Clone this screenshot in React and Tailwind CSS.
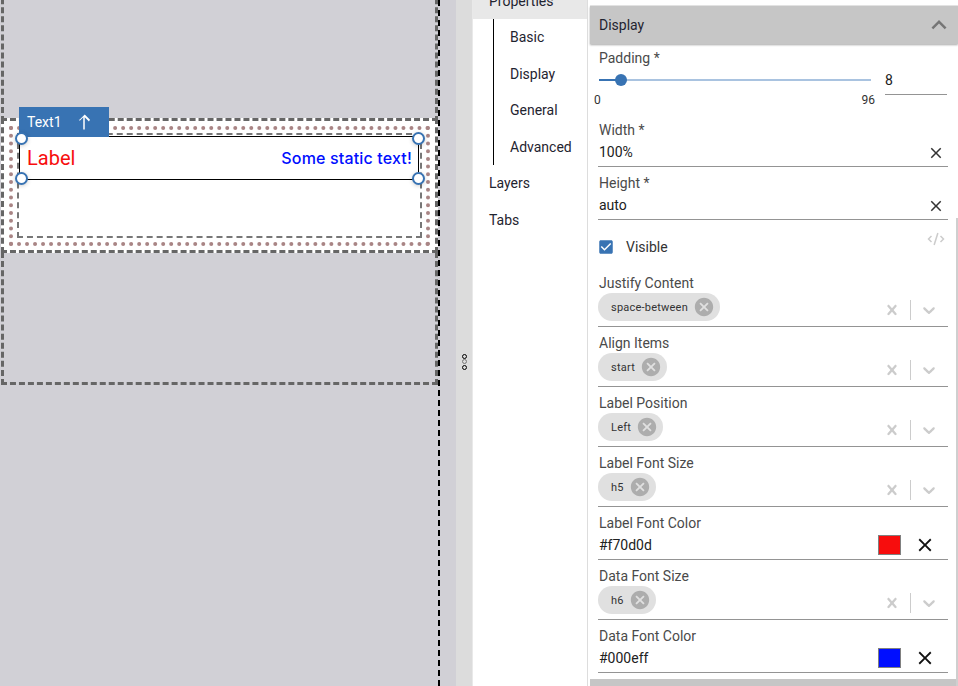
const closePath = 'M19 6.41L17.59 5 12 10.59 6.41 5 5 6.41 10.59 12 5 17.59 6.41 19 12 13.41 17.59 19 19 17.59 13.41 12z';
const crossPath = 'M14.348 14.849c-0.469 0.469-1.229 0.469-1.697 0l-2.651-3.030-2.651 3.029c-0.469 0.469-1.229 0.469-1.697 0-0.469-0.469-0.469-1.229 0-1.697l2.758-3.15-2.759-3.152c-0.469-0.469-0.469-1.228 0-1.697s1.228-0.469 1.697 0l2.652 3.031 2.651-3.031c0.469-0.469 1.228-0.469 1.697 0s0.469 1.229 0 1.697l-2.758 3.152 2.758 3.15c0.469 0.469 0.469 1.229 0 1.698z';
const chevronPath = 'M4.516 7.548c0.436-0.446 1.043-0.481 1.576 0l3.908 3.747 3.908-3.747c0.533-0.481 1.141-0.446 1.576 0 0.436 0.445 0.408 1.197 0 1.615-0.406 0.418-4.695 4.502-4.695 4.502-0.217 0.223-0.502 0.335-0.789 0.335s-0.572-0.112-0.79-0.335c0 0-4.287-4.084-4.695-4.502s-0.436-1.17 0-1.615z';
const cancelPath = 'M12 2C6.47 2 2 6.47 2 12s4.47 10 10 10 10-4.47 10-10S17.53 2 12 2zm5 13.59L15.59 17 12 13.41 8.41 17 7 15.59 10.59 12 7 8.41 8.41 7 12 10.59 15.59 7 17 8.41 13.41 12 17 15.59z';

const CloseIcon = ({ size = 18, className = '' }) => (
  <svg width={size} height={size} viewBox="0 0 24 24" fill="currentColor" className={className}>
    <path d={closePath} />
  </svg>
);

const Handle = ({ className }) => (
  <div className={`absolute w-[13px] h-[13px] rounded-full bg-white border-2 border-[#3873b3] shadow-[0_1px_4px_rgba(0,0,0,0.2)] ${className}`} />
);

const TextField = ({ label, value }) => (
  <div className="h-[47px] mb-[6px] border-b border-[#949494]">
    <div className="h-5 pl-px leading-5 text-[#4a4a4a]">{label}</div>
    <div className="flex items-center justify-between h-[25px] pl-px pr-[3px] text-[#212121]">
      <span className="-mt-px">{value}</span>
      <CloseIcon className="text-[#333]" />
    </div>
  </div>
);

const ColorField = ({ label, value, swatch }) => (
  <div className="h-[47px] mb-[6px] border-b border-[#949494]">
    <div className="h-5 pl-px leading-5 text-[#4a4a4a]">{label}</div>
    <div className="flex items-center h-[24px] pl-px text-[#212121]">
      <span className="flex-1">{value}</span>
      <div className={`w-[23px] h-5 border border-[#808080] ${swatch}`} />
      <CloseIcon size={22} className="ml-[13px] mr-[12px] text-[#111]" />
    </div>
  </div>
);

const SelectField = ({ label, value }) => (
  <div className="h-[54px] mb-[6px] border-b border-[#949494]">
    <div className="h-5 pl-px leading-5 text-[#4a4a4a]">{label}</div>
    <div className="flex items-center h-7">
      <div className="flex items-center h-7 rounded-full bg-[#e0e0e0] pl-[13px] pr-[5px] text-[11px] tracking-[0.02em] text-[#333]">
        <span className="mt-px">{value}</span>
        <svg width="22" height="22" viewBox="0 0 24 24" fill="#adadad" className="ml-[5px]">
          <path d={cancelPath} />
        </svg>
      </div>
      <div className="flex-1" />
      <div className="flex items-center mt-[5px] text-[#cccccc]">
        <svg width="20" height="20" viewBox="0 0 20 20" fill="currentColor"><path d={crossPath} /></svg>
        <div className="w-px h-5 bg-[#cccccc] ml-[8px] mr-[8px]" />
        <svg width="20" height="20" viewBox="0 0 20 20" fill="currentColor" className="mr-[9px]"><path d={chevronPath} /></svg>
      </div>
    </div>
  </div>
);

export default function App() {
  return (
    <div className="flex w-[958px] h-[686px] overflow-hidden bg-white text-sm font-['Roboto',sans-serif]">

      {/* Canvas */}
      <div className="w-[456px] shrink-0 bg-[#d1d0d6]">
        <div className="flex flex-col w-[440px] h-full border-r-2 border-dashed border-black">
          <div className="w-[437px] h-[405px] shrink-0 -mt-[20px] pt-[135px] border-[3px] border-dashed border-[#666666] ml-px">
            <div className="relative -mx-[3px] h-[135px] border-[3px] border-dashed border-[#666666] bg-white p-[5px]">
              <div className="h-[120px] border-4 border-dotted border-[#a98585] px-[4px] pt-[3px]">
                <div className="relative h-[105px] border-2 border-dashed border-[#777777]">
                  <div className="flex items-center justify-between h-11 mt-px mr-px border border-black pl-[7px] pr-[6px]">
                    <span className="text-xl text-[#f70d0d]">Label</span>
                    <span className="font-['Inter',sans-serif] text-base font-medium tracking-[0.01em] text-[#000eff]">Some static text!</span>
                  </div>
                  <div className="absolute left-0 -top-[28px] flex items-center w-[90px] h-[30px] pl-2 bg-[#3873b3] text-white">
                    <span>Text1</span>
                    <svg width="18" height="18" viewBox="0 0 24 24" fill="currentColor" className="ml-[13px]">
                      <path d="M5 9l1.41 1.41L11 5.83V22h2V5.83l5.59 5.59L20 9l-7-7-7 7z" />
                    </svg>
                  </div>
                  <Handle className="-left-[4px] -top-[3px]" />
                  <Handle className="-left-[4px] top-[37px]" />
                  <Handle className="-right-[5px] -top-[3px]" />
                  <Handle className="-right-[5px] top-[37px]" />
                </div>
              </div>
            </div>
          </div>
        </div>
      </div>

      {/* Splitter */}
      <div className="flex flex-col items-center justify-center gap-[0.5px] w-[17px] shrink-0 pt-[37px] bg-[#dcdcdc] border-r border-[#e9e9e9]">
        <div className="w-[5px] h-[5px] rounded-full border border-black" />
        <div className="w-[5px] h-[5px] rounded-full border border-[#777777]" />
        <div className="w-[5px] h-[5px] rounded-full border border-black" />
      </div>

      {/* Nav */}
      <div className="w-[114px] shrink-0 -mt-[17.5px] text-[#1f2430] leading-[36.5px]">
        <div className="h-[36.5px] pl-4 bg-[#e8e8e8]">Properties</div>
        <div className="ml-5 pl-4 border-l border-black">
          <div className="h-[36.5px]">Basic</div>
          <div className="h-[36.5px]">Display</div>
          <div className="h-[36.5px]">General</div>
          <div className="h-[36.5px]">Advanced</div>
        </div>
        <div className="h-[36.5px] pl-4">Layers</div>
        <div className="h-[36.5px] pl-4">Tabs</div>
      </div>

      {/* Properties panel */}
      <div className="relative flex-1 border-l border-[#dddddd] pl-[2px]">
        <div className="h-[6px] border-b border-[#e8e8e8]" />
        <div className="flex items-center justify-between h-[38px] pl-[9px] pr-[4px] bg-[#c6c6c6] text-[#1f2430] shadow-[0_1px_2px_rgba(0,0,0,0.35)]">
          <span>Display</span>
          <svg width="30" height="30" viewBox="0 0 24 24" fill="#757575">
            <path d="M12 8l-6 6 1.41 1.41L12 10.83l4.59 4.58L18 14z" />
          </svg>
        </div>
        <div className="pl-2 pr-[10px] pt-1">
          <div className="h-[52px] mb-[20px]">
            <div className="h-5 pl-px leading-5 text-[#4a4a4a]">Padding *</div>
            <div className="flex">
              <div className="w-[272px] ml-px">
                <div className="relative h-[24px] flex items-center">
                  <div className="w-full h-[2px] bg-[#a9c3e0]" />
                  <div className="absolute left-0 w-[17px] h-[2px] bg-[#3873b3]" />
                  <div className="absolute left-[16px] w-[12px] h-[12px] rounded-full bg-[#3873b3]" />
                </div>
                <div className="flex justify-between -ml-[5px] -mr-[4px] text-xs leading-[14px] text-[#333] mt-[1px]">
                  <span>0</span>
                  <span>96</span>
                </div>
              </div>
              <div className="w-[62px] h-[27px] ml-[14px] border-b border-[#949494] leading-6 text-[#212121]">8</div>
            </div>
          </div>
          <TextField label="Width *" value="100%" />
          <TextField label="Height *" value="auto" />
          <div className="relative flex items-center h-[47px] pb-[5px]">
            <svg width="18" height="18" viewBox="0 0 24 24" fill="#3873b3" className="-ml-px">
              <path d="M19 3H5c-1.11 0-2 .9-2 2v14c0 1.1.89 2 2 2h14c1.1 0 2-.9 2-2V5c0-1.11-.9-2-2-2zm-9 14l-5-5 1.41-1.41L10 14.17l7.59-7.59L19 8l-9 9z" />
            </svg>
            <span className="ml-[11px] text-[#333]">Visible</span>
            <svg width="18" height="18" viewBox="0 0 24 24" fill="none" stroke="#cccccc" strokeWidth="2" className="absolute right-[3px] top-[4px]">
              <path d="m18 16 4-4-4-4" />
              <path d="m6 8-4 4 4 4" />
              <path d="m14.5 4-5 16" />
            </svg>
          </div>
          <SelectField label="Justify Content" value="space-between" />
          <SelectField label="Align Items" value="start" />
          <SelectField label="Label Position" value="Left" />
          <SelectField label="Label Font Size" value="h5" />
          <ColorField label="Label Font Color" value="#f70d0d" swatch="bg-[#f70d0d]" />
          <SelectField label="Data Font Size" value="h6" />
          <ColorField label="Data Font Color" value="#000eff" swatch="bg-[#000eff]" />
        </div>
        <div className="h-2 mt-[3px] bg-[#c6c6c6]" />
        <div className="absolute right-0 top-[218px] w-[2px] h-[468px] bg-[#cfcfcf]" />
      </div>
    </div>
  );
}
